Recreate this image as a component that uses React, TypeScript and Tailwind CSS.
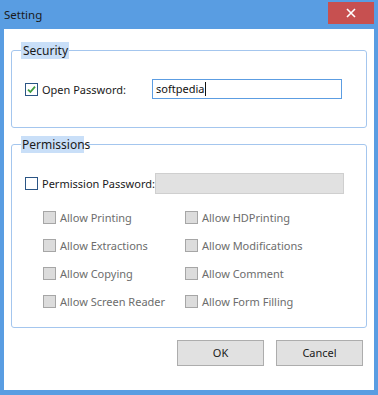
import React from "react";

const font = { fontFamily: '"Noto Sans", "Liberation Sans", sans-serif' };

function GrayCheck({ label }: { label: string }) {
  return (
    <div className="flex items-center h-[13px]">
      <span className="w-[13px] h-[13px] border border-[#a6a6a6] bg-[#dcdcdc] box-border" />
      <span className="ml-[4px] text-[11px] leading-none text-[#6d6d6d] whitespace-nowrap">{label}</span>
    </div>
  );
}

export default function App() {
  const perms = [
    ["Allow Printing", "Allow HDPrinting"],
    ["Allow Extractions", "Allow Modifications"],
    ["Allow Copying", "Allow Comment"],
    ["Allow Screen Reader", "Allow Form Filling"],
  ];

  return (
    <div className="w-[378px] h-[395px] bg-[#599de2] flex flex-col" style={font}>
      {/* Title bar */}
      <div className="h-[29px] flex items-start">
        <div className="pl-[4px] pt-[8px] text-[11.5px] leading-[14px] text-[#1a1a1a] flex-1">Setting</div>
        <div className="w-[46px] h-[22px] mt-[2px] mr-[4px] bg-[#c75050] flex items-center justify-center">
          <svg width="10" height="10" viewBox="0 0 10 10">
            <path d="M1 1L9 9M9 1L1 9" stroke="#fff" strokeWidth="1.6" />
          </svg>
        </div>
      </div>

      {/* Client area */}
      <div className="mx-[4px] mb-[5px] flex-1 bg-white flex flex-col px-[7px] pt-[13px]">
        {/* Security */}
        <fieldset className="h-[86px] w-[356px] border border-[#a4c6ee] rounded-[3px] m-0 p-0">
          <legend className="ml-[9px] pl-[2px] h-[17px] w-[48px] bg-[#c9dff8] text-[12px] leading-[17px] text-[#1a1a1a]">
            Security
          </legend>
          <div className="flex items-center mt-[20px] ml-[13px]">
            <span className="w-[13px] h-[13px] border border-[#2b5585] bg-white box-border flex items-center justify-center">
              <svg width="9" height="9" viewBox="0 0 9 9">
                <path d="M1 4.6L3.4 7L8 1.6" stroke="#3f9c3f" strokeWidth="1.8" fill="none" />
              </svg>
            </span>
            <span className="ml-[4px] text-[11px] leading-none text-[#1a1a1a] w-[110px] whitespace-nowrap">Open Password:</span>
            <div className="w-[190px] h-[20px] border border-[#5c9de2] box-border flex items-center pl-[3px] text-[11px] text-[#111]">
              softpedia
              <span className="w-[1px] h-[14px] bg-[#111] ml-[1px]" />
            </div>
          </div>
        </fieldset>

        {/* Permissions */}
        <fieldset className="mt-[8px] h-[192px] w-[356px] border border-[#a4c6ee] rounded-[3px] m-0 p-0">
          <legend className="ml-[9px] pl-[1px] h-[17px] w-[63px] bg-[#c9dff8] text-[12px] leading-[17px] text-[#1a1a1a]">
            Permissions
          </legend>
          <div className="flex items-center mt-[20px] ml-[13px]">
            <span className="w-[13px] h-[13px] border border-[#2b5585] bg-white box-border" />
            <span className="ml-[4px] text-[11px] leading-none text-[#1a1a1a] w-[113px] whitespace-nowrap">Permission Password:</span>
            <div className="w-[189px] h-[21px] border border-[#cfcfcf] bg-[#e1e1e1] box-border" />
          </div>
          <div className="ml-[31px] mt-[17px] flex flex-col gap-[15px]">
            {perms.map(([a, b]) => (
              <div key={a} className="grid grid-cols-[142px_1fr]">
                <GrayCheck label={a} />
                <GrayCheck label={b} />
              </div>
            ))}
          </div>
        </fieldset>

        {/* Buttons */}
        <div className="flex justify-end gap-[12px] mt-[12px] mr-[4px]">
          <button className="w-[87px] h-[26px] bg-[#e1e1e1] border border-[#adadad] text-[11px] text-[#1a1a1a]">OK</button>
          <button className="w-[87px] h-[26px] bg-[#e1e1e1] border border-[#adadad] text-[11px] text-[#1a1a1a]">Cancel</button>
        </div>
      </div>
    </div>
  );
}
